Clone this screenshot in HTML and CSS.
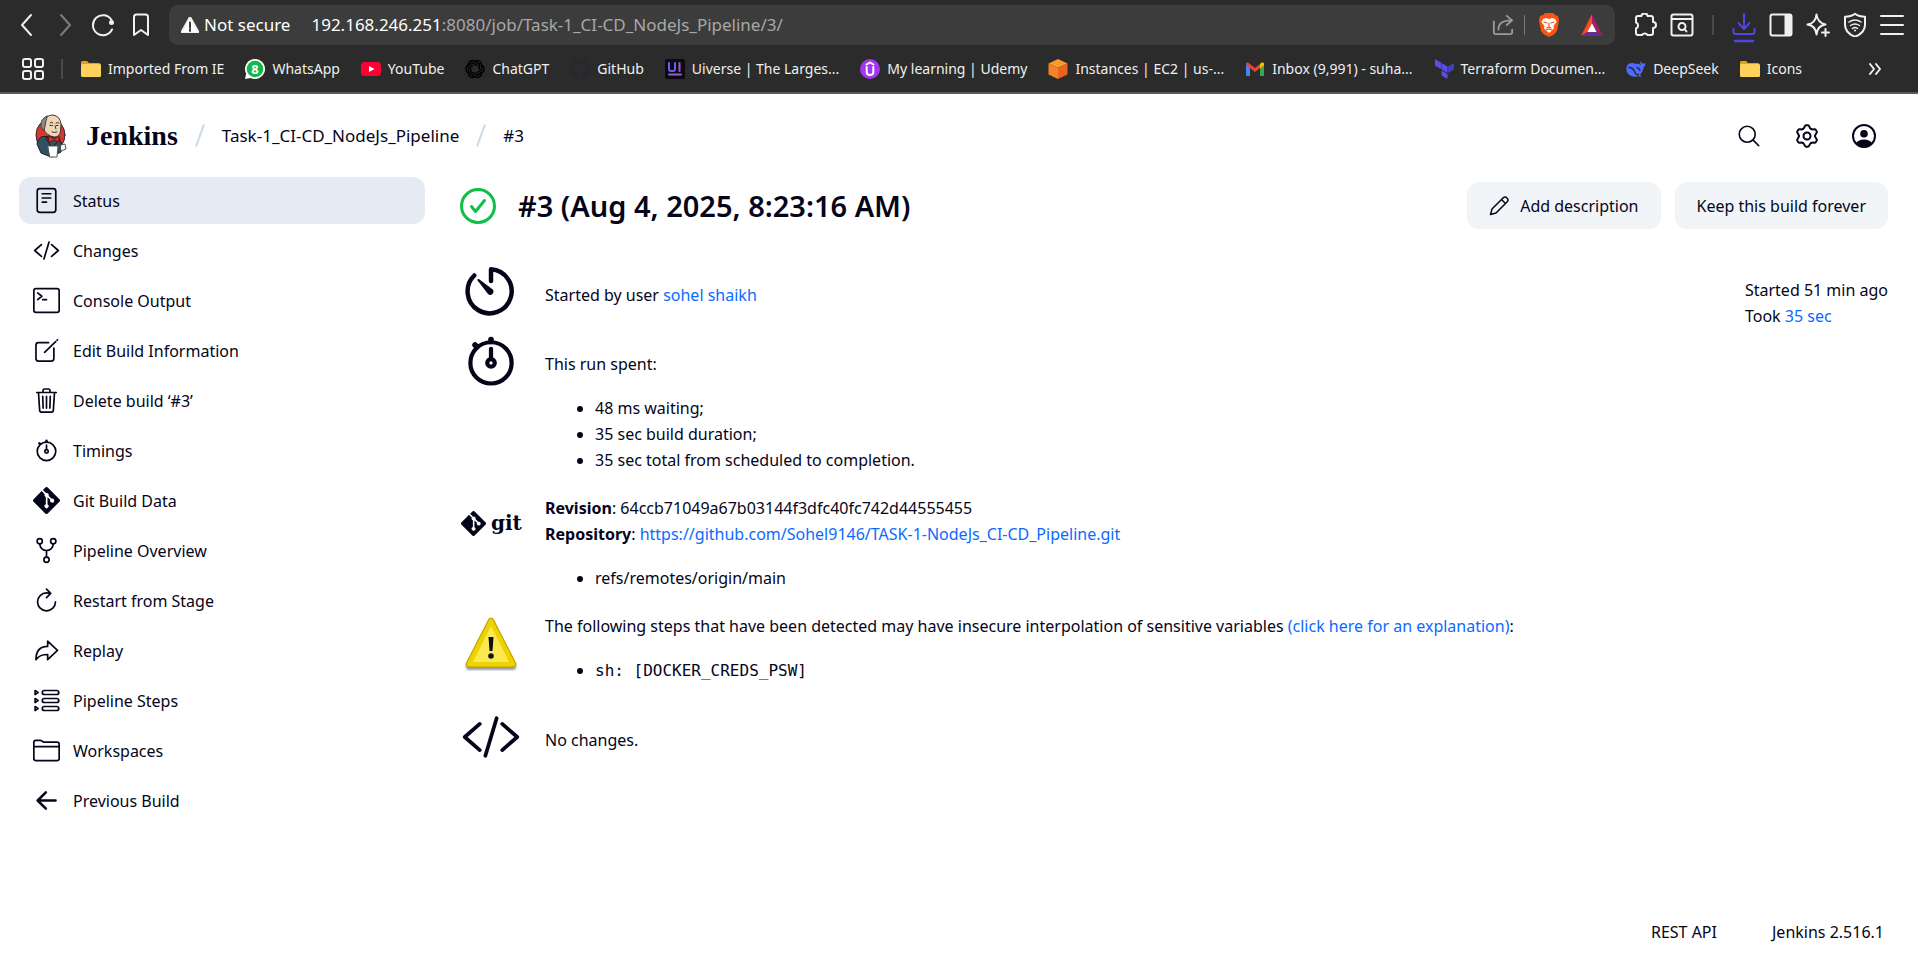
FILE: index.html
```html
<!DOCTYPE html>
<html lang="en">
<head>
<meta charset="utf-8">
<title>Task-1_CI-CD_NodeJs_Pipeline #3 - Jenkins</title>
<link rel="stylesheet" href="styles.css">
</head>
<body>
<svg class="defs" aria-hidden="true">
  <symbol id="code" viewBox="0 0 512 512"><path d="M160 368L32 256l128-112M352 368l128-112-128-112M304 96l-96 320"/></symbol>
  <symbol id="stopwatch" viewBox="0 0 512 512"><path d="M256 232v-80"/><path stroke-width="48" d="M256 88V72M132 132l-12-12"/><circle cx="256" cy="272" r="32"/><circle cx="256" cy="272" r="176"/></symbol>
  <symbol id="gitmark" viewBox="0 0 24 24"><path fill="currentColor" stroke="none" d="M23.5 10.9L13.1.5a1.5 1.5 0 0 0-2.1 0L8.8 2.6l2.8 2.8a1.8 1.8 0 0 1 2.3 2.3l2.6 2.7a1.8 1.8 0 1 1-1.1 1l-2.5-2.4v6.5a1.8 1.8 0 1 1-1.5-.1V8.8a1.8 1.8 0 0 1-1-2.4L7.700 3.600.500 10.900a1.500 1.500 0 0 0 0 2.200l10.400 10.400a1.500 1.500 0 0 0 2.200 0l10.400-10.400a1.500 1.500 0 0 0 0-2.200z"/></symbol>
  <symbol id="folder" viewBox="0 0 20 20"><path fill="#e0a312" stroke="none" d="M0 3.500a1.500 1.500 0 0 1 1.500-1.500H6l2 2h10.500L20 6v11H0z"/><rect y="5" width="20" height="13" rx="1.500" fill="#fdd35b" stroke="none"/></symbol>
  <symbol id="tooth" viewBox="0 0 24 24"><path d="M7.900 5C9 4.300 9.300 3.700 9.600 2.700Q10 1.300 11.200 1.300H12.800Q14 1.300 14.400 2.700C14.700 3.700 15 4.300 16.100 5"/></symbol>
</svg>

<div class="browser">
  <div class="toolbar">
    <div class="nav-buttons">
      <button aria-label="Back"><svg viewBox="0 0 24 24"><path d="M16 2L7 12l9 10"/></svg></button>
      <button class="dim" aria-label="Forward"><svg viewBox="0 0 24 24"><path d="M8 2l9 10L8 22"/></svg></button>
      <button aria-label="Reload"><svg viewBox="0 0 24 24"><path d="M21 16.500A10 10 0 1 1 20.500 7"/><circle cx="20.500" cy="9.500" r="2.500" fill="currentColor" stroke="none"/></svg></button>
      <button aria-label="Bookmark"><svg viewBox="0 0 24 24"><path d="M5 4q0-2.500 2.500-2.500h9Q19 1.500 19 4v18l-7-5-7 5z"/></svg></button>
    </div>
    <div class="address">
      <svg class="warn" viewBox="0 0 18 16"><path fill="#fff" d="M9 0l9 16H0z"/><path stroke="#3c3c3c" stroke-width="2" d="M9 5.500v5M9 12v2"/></svg>
      <span class="secure">Not secure</span>
      <span class="url"><b>192.168.246.251</b>:8080/job/Task-1_CI-CD_NodeJs_Pipeline/3/</span>
      <button class="share" aria-label="Share"><svg viewBox="0 0 24 24"><path d="M2 8v12q0 2 2 2h16q2 0 2-2v-3M7 17q0-10 14-10M16 2l6 5-6 5"/></svg></button>
      <i class="sep light"></i>
      <button class="brave" aria-label="Brave Shields"><svg viewBox="0 0 20 24"><path fill="#fb5412" stroke="none" d="M6 0h8l2 2 3 1 1 4-2 11-3 3.500-5 2.500-5-2.500L2 18 0 7l1-4 3-1z"/><path fill="#fff" stroke="none" d="M4 6l3-1 3 1 3-1 3 1 1.500 3-3 4 .5 2.500L10 20l-5-4.500.5-2.500-3-4z"/><path stroke="#fb5412" stroke-width="1.200" d="M5 9l3 1M15 9l-3 1M10 10v4l-2 1M10 14l2 1M7 17l3-1 3 1"/></svg></button>
      <button class="bat" aria-label="Brave Rewards"><svg viewBox="0 0 24 24"><path fill="#ff4724" stroke="none" d="M12 0L0 24l8-5 4-8z"/><path fill="#9e1f63" stroke="none" d="M12 0l12 24-8-5-4-8z"/><path fill="#662d91" stroke="none" d="M0 24h24l-8-5H8z"/><path fill="#fff" stroke="none" d="M12 10l5 9.500H7z"/></svg></button>
    </div>
    <div class="tools">
      <button aria-label="Extensions"><svg viewBox="0 0 24 24"><path d="M3 5q0-2 2-2h3.500a3 2.600 0 0 1 6 0H18q2 0 2 2v4a3 3 0 0 1 0 6v5q0 2-2 2h-3.500a3 2.500 0 0 0-5.500 0H5q-2 0-2-2v-4.500a3.200 3.200 0 0 0 0-6z"/></svg></button>
      <button aria-label="Find"><svg viewBox="0 0 24 24"><rect x="1.500" y="1.500" width="21" height="21" rx="2"/><path d="M2 6h20"/><circle cx="12" cy="13.500" r="3.500"/><path d="M14.500 16l2 2.500"/></svg></button>
      <i class="sep"></i>
      <button class="download" aria-label="Downloads"><svg viewBox="0 0 24 30"><path d="M12 1v14M6.500 10l5.500 6 5.500-6M1.500 16v3q0 2 2 2h17q2 0 2-2v-3"/><path stroke-width="2.500" d="M3 28h18"/></svg></button>
      <button aria-label="Sidebar"><svg viewBox="0 0 24 24"><rect x="1.500" y="1.500" width="21" height="21" rx="2"/><path fill="currentColor" d="M16.500 2H21v20h-4.500z"/></svg></button>
      <button aria-label="Leo AI"><svg viewBox="0 0 24 24"><path d="M10.500 1.500q1 8 9 10-8 1-9 10-1-9-9-10 8-1 9-10z"/><path stroke-width="2" d="M19.500 16v7M16 19.500h7"/></svg></button>
      <button aria-label="VPN"><svg viewBox="0 0 24 24"><path d="M12 .8q4 3 10 3v8q0 8-10 12-10-4-10-12v-8q6 0 10-3z"/><path stroke-width="1.500" d="M6 9q6-4 12 0M7.500 12.500q4.500-3 9 0M9.500 15.500q2.500-2 5 0"/><circle cx="12" cy="17.500" r="1" fill="currentColor" stroke="none"/></svg></button>
      <button aria-label="Menu"><svg viewBox="0 0 24 24"><path stroke-width="2" d="M1 3h22M1 12h22M1 21h22"/></svg></button>
    </div>
  </div>
  <nav class="bookmarks" aria-label="Bookmarks">
    <button class="apps" aria-label="All apps"><svg viewBox="0 0 24 24"><rect x="2" y="2" width="8" height="8" rx="2"/><rect x="14" y="2" width="8" height="8" rx="2"/><rect x="2" y="14" width="8" height="8" rx="2"/><rect x="14" y="14" width="8" height="8" rx="2"/></svg></button>
    <i class="sep"></i>
    <div class="marks">
    <a href="#"><svg><use href="#folder"/></svg>Imported From IE</a>
    <a href="#"><svg viewBox="0 0 20 20"><path fill="#fff" stroke="none" d="M10 0a10 10 0 1 1-4.500 18.900L0 20l1.200-5.200A10 10 0 0 1 10 0z"/><circle cx="10" cy="10" r="8.300" fill="#12b74a" stroke="none"/><text x="10" y="14.500" class="badge">8</text></svg>WhatsApp</a>
    <a href="#"><svg viewBox="0 0 20 20"><rect y="3" width="20" height="14" rx="3.500" fill="#ff0033" stroke="none"/><path fill="#fff" stroke="none" d="M8 7l5.500 3L8 13z"/></svg>YouTube</a>
    <a href="#"><svg viewBox="0 0 20 20" class="gpt"><path d="M10 2.500a4 4 0 0 1 6.500 3.700v5l-4.500 2.500"/><path transform="rotate(60 10 10)" d="M10 2.500a4 4 0 0 1 6.500 3.700v5l-4.500 2.500"/><path transform="rotate(120 10 10)" d="M10 2.500a4 4 0 0 1 6.500 3.700v5l-4.500 2.500"/><path transform="rotate(180 10 10)" d="M10 2.500a4 4 0 0 1 6.500 3.700v5l-4.500 2.500"/><path transform="rotate(240 10 10)" d="M10 2.500a4 4 0 0 1 6.500 3.700v5l-4.500 2.500"/><path transform="rotate(300 10 10)" d="M10 2.500a4 4 0 0 1 6.500 3.700v5l-4.500 2.500"/></svg>ChatGPT</a>
    <a href="#"><svg viewBox="0 0 16 16"><path fill="#24292f" stroke="none" d="M8 0a8 8 0 0 0-2.530 15.590c.4.070.55-.17.55-.38v-1.490c-2.010.37-2.530-.49-2.690-.94-.09-.23-.48-.94-.82-1.130-.28-.15-.68-.52-.01-.53.63-.01 1.080.58 1.230.82.72 1.210 1.870.87 2.330.66.070-.52.280-.87.510-1.070-1.780-.2-3.640-.89-3.640-3.950 0-.87.310-1.590.820-2.150-.080-.2-.360-1.020.080-2.120 0 0 .670-.210 2.200.820a7.500 7.500 0 0 1 4 0c1.530-1.040 2.200-.820 2.200-.820.440 1.100.160 1.920.080 2.120.510.560.820 1.270.820 2.150 0 3.070-1.870 3.750-3.650 3.950.290.250.540.730.540 1.480v2.200c0 .210.150.460.550.380A8 8 0 0 0 8 0z"/></svg>GitHub</a>
    <a href="#"><svg viewBox="0 0 20 20"><rect width="20" height="20" rx="2" fill="#0c0c10" stroke="none"/><path stroke="#6c5cf0" stroke-width="2" d="M4 4v6q0 2 2 2h2q2 0 2-2V4"/><path stroke="#9a5ad6" stroke-width="2" d="M14.500 4v8M4 15.500h12"/></svg>Uiverse | The Larges...</a>
    <a href="#"><svg viewBox="0 0 20 20"><circle cx="10" cy="10" r="10" fill="#a435f0" stroke="none"/><path stroke="#fff" stroke-width="2" d="M6.500 5.500L10 3.500l3.500 2M6.700 8v5q0 3 3.300 3t3.300-3V8"/></svg>My learning | Udemy</a>
    <a href="#"><svg viewBox="0 0 20 20"><path fill="#fb9a2c" stroke="none" d="M10 0l9.500 4.500L10 9 .500 4.500z"/><path fill="#f58225" stroke="none" d="M.500 4.500L10 9v11L.500 15.500z"/><path fill="#e8651f" stroke="none" d="M19.500 4.500L10 9v11l9.500-4.500z"/></svg>Instances | EC2 | us-...</a>
    <a href="#"><svg viewBox="0 0 20 20"><path fill="#4285f4" stroke="none" d="M1 5l4 3v9H2q-1 0-1-1z"/><path fill="#34a853" stroke="none" d="M19 5l-4 3v9h3q1 0 1-1z"/><path fill="#ea4335" stroke="none" d="M1 5q0-2 2-1.500L10 9l7-5.500Q19 3 19 5l-4 4-5 4-5-4z"/><path fill="#fbbc04" stroke="none" d="M15 5l2-1.500Q19 3 19 5v1.500l-4 3z"/></svg>Inbox (9,991) - suha...</a>
    <a href="#"><svg viewBox="0 0 20 20"><path fill="#5c4ee5" stroke="none" d="M1 0l6 3.500v6.500L1 6.500zM7.500 4l6 3.500V14l-6-3.500zM7.500 11.500l6 3.500v5l-6-3.500z"/><path fill="#4040b2" stroke="none" d="M14 7.500l6-3.500v6.500L14 14z"/></svg>Terraform Documen...</a>
    <a href="#"><svg viewBox="0 0 20 20"><path fill="#4d6bfe" stroke="none" d="M19.600 4q-1.500 1-2.600.5-2-.500-2-2.500-1.500 1.500 0 4L12 4.500 10 5Q4 2.500 1 6.500q-2 5 1.500 9 5 3.500 10 1.500l2 1 .500-1.500-1-1Q17.500 12 17.500 8q2-1 2.100-4z"/><path stroke="#2b2b2b" stroke-width="1.500" d="M3 8.500q4 0 5.500 4t4 3M11 8.500q2.500.500 3 3"/></svg>DeepSeek</a>
    <a href="#"><svg><use href="#folder"/></svg>Icons</a>
    </div>
    <button class="more" aria-label="More bookmarks"><svg viewBox="0 0 14 14"><path d="M2 2l4 5-4 5M8 2l4 5-4 5"/></svg></button>
  </nav>
</div>

<header class="page-header">
  <a class="brand" href="#"><svg class="butler" viewBox="0 0 32 44"><ellipse cx="15.500" cy="21" rx="14.500" ry="16" fill="#d33833" stroke="#3a2226"/><path fill="#335061" stroke="#16202a" d="M6 23q-4 3-4 7l4 9 10 4 10-5 1-6q-1-7-7-10z"/><path fill="#f0d6b7" stroke="#433" d="M8 8Q11 1 18 1q7 1 8 9l-.500 7q-1 6-6 6-8-1-11-8z"/><path fill="#8b8984" stroke="#444" d="M12 2Q5 5 6 13l3 4 1-5 1-5z"/><path stroke="#333" d="M15 9q2-2 3 0M21 9q2-1 3 0M15 11.500h2.500M21 11.500h2M20 12l1 3M17 18q3 1 5 0"/><path fill="#335061" stroke="#16202a" d="M11 24l6 10 8-9z"/><path fill="#d33833" stroke="#711" d="M14 22l5 3 5-3v6l-5-2-5 2z"/><path fill="#fff" stroke="#555" d="M13 32h10l-1 11h-7zM26 31l4-1 1 5-5 2z"/></svg><span>Jenkins</span></a>
  <i class="slash"></i>
  <a href="#">Task-1_CI-CD_NodeJs_Pipeline</a>
  <i class="slash"></i>
  <a href="#">#3</a>
  <div class="header-actions">
    <button aria-label="Search"><svg viewBox="0 0 512 512"><path d="M221 64a157 157 0 1 0 157 157A157 157 0 0 0 221 64zM338 338l110 110"/></svg></button>
    <button aria-label="Manage Jenkins"><svg viewBox="0 0 24 24" class="gear"><use href="#tooth"/><use href="#tooth" transform="rotate(60 12 12)"/><use href="#tooth" transform="rotate(120 12 12)"/><use href="#tooth" transform="rotate(180 12 12)"/><use href="#tooth" transform="rotate(240 12 12)"/><use href="#tooth" transform="rotate(300 12 12)"/><circle cx="12" cy="12" r="3.500"/></svg></button>
    <button aria-label="User"><svg viewBox="0 0 24 24" class="gear"><circle cx="12" cy="12" r="11"/><circle cx="12" cy="9.800" r="3.800" fill="currentColor" stroke="none"/><path fill="currentColor" stroke="none" d="M4 19q2.500-3.500 8-3.500t8 3.500q-3 4.500-8 4.500T4 19z"/></svg></button>
  </div>
</header>

<div class="body">
  <nav class="tasks" aria-label="Build tasks">
    <a class="active" href="#"><svg viewBox="0 0 512 512"><rect x="80" y="32" width="352" height="448" rx="48"/><path d="M176 128h160M176 208h160M176 288h80"/></svg>Status</a>
    <a href="#"><svg><use href="#code"/></svg>Changes</a>
    <a href="#"><svg viewBox="0 0 512 512"><rect x="16" y="32" width="480" height="448" rx="40"/><path d="M88 112l80 64-80 64M184 240h72"/></svg>Console Output</a>
    <a href="#"><svg viewBox="0 0 512 512"><path d="M396 208v200a48 48 0 0 1-48 48H104a48 48 0 0 1-48-48V156a48 48 0 0 1 48-48h190M220 290L430 88M456 62l10-10"/></svg>Edit Build Information</a>
    <a href="#"><svg viewBox="0 0 512 512"><path d="M104 104l22 336q2 36 34 36h192q32 0 34-36l22-336M72 104h368M190 104V64q2-26 26-26h80q24 0 26 26v40M256 176v224M184 176l8 224M328 176l-8 224"/></svg>Delete build ‘#3’</a>
    <a href="#"><svg><use href="#stopwatch"/></svg>Timings</a>
    <a href="#"><svg><use href="#gitmark"/></svg>Git Build Data</a>
    <a href="#"><svg viewBox="0 0 512 512"><circle cx="128" cy="80" r="50"/><circle cx="384" cy="80" r="50"/><circle cx="256" cy="432" r="50"/><path d="M256 256v124M128 130c0 84 68 126 128 126s128-42 128-126"/></svg>Pipeline Overview</a>
    <a href="#"><svg viewBox="0 0 512 512"><path d="M320 122s-24-10-64-10a170 170 0 1 0 170 170M256 40l80 80-80 80"/></svg>Restart from Stage</a>
    <a href="#"><svg viewBox="0 0 512 512"><path d="M464 252L278 78v98C104 176 56 304 56 430c50-64 96-98 222-98v98z"/></svg>Replay</a>
    <a href="#"><svg viewBox="0 0 512 512"><path d="M40 66l56 38-56 38zM40 218l56 38-56 38zM40 370l56 38-56 38z"/><rect x="176" y="66" width="312" height="76" rx="38"/><rect x="176" y="218" width="312" height="76" rx="38"/><rect x="176" y="370" width="312" height="76" rx="38"/></svg>Pipeline Steps</a>
    <a href="#"><svg viewBox="0 0 512 512"><path d="M456 448H56a40 40 0 0 1-40-40V104a40 40 0 0 1 40-40h84q12 0 22 7l28 18q10 7 22 7h244a40 40 0 0 1 40 40v272a40 40 0 0 1-40 40zM16 184h480"/></svg>Workspaces</a>
    <a href="#"><svg viewBox="0 0 512 512"><path stroke-width="48" d="M244 412L88 256l156-156M96 256h332"/></svg>Previous Build</a>
  </nav>

  <main>
    <div class="title-bar">
      <svg class="result" viewBox="0 0 36 36"><circle cx="18" cy="18" r="16.500"/><path d="M11.500 18.500l4 5 9-11"/></svg>
      <h1>#3 (Aug 4, 2025, 8:23:16 AM)</h1>
      <button class="action"><svg viewBox="0 0 20 20"><path d="M1.500 18.500l1.500-5.500L14 2a2.800 2.800 0 0 1 4 4L7 17zM12.500 3.500l4 4"/></svg>Add description</button>
      <button class="action">Keep this build forever</button>
    </div>
    <div class="details">
      <div class="summary">
        <section class="row">
          <svg viewBox="0 0 512 512"><path stroke-width="38" d="M113 115A188 188 0 1 0 256 62v100"/><path fill="currentColor" stroke="none" d="M232 276l-92-120q-2-12 12-10l122 90a30 30 0 0 1-42 40z"/></svg>
          <p>Started by user <a href="#">sohel shaikh</a></p>
        </section>
        <section class="row">
          <svg class="bold"><use href="#stopwatch"/></svg>
          <div><p>This run spent:</p><ul><li>48 ms waiting;</li><li>35 sec build duration;</li><li>35 sec total from scheduled to completion.</li></ul></div>
        </section>
        <section class="row top">
          <span class="gitlogo"><svg><use href="#gitmark"/></svg>git</span>
          <div><p><b>Revision</b>: 64ccb71049a67b03144f3dfc40fc742d44555455</p><p><b>Repository</b>: <a href="#">https://github.com/Sohel9146/TASK-1-NodeJs_CI-CD_Pipeline.git</a></p><ul><li>refs/remotes/origin/main</li></ul></div>
        </section>
        <section class="row top">
          <svg viewBox="0 0 60 60"><defs><filter id="soft"><feGaussianBlur stdDeviation="1.200"/></filter></defs><rect x="5" y="50" width="50" height="7" rx="3" fill="#999" stroke="none" filter="url(#soft)"/><path fill="#edd400" stroke="#c4a000" stroke-width="1.200" d="M27.500 7q2.500-4 5 0l22 43q1 4-3 4h-43q-4 0-3-4z"/><path fill="#fce94f" stroke="none" d="M30 13l18 36H12z"/><path fill="#111" stroke="none" d="M27.500 24h5l-1 14h-3z"/><circle cx="30" cy="43" r="2.800" fill="#111" stroke="none"/></svg>
          <div><p>The following steps that have been detected may have insecure interpolation of sensitive variables <a href="#">(click here for an explanation)</a>:</p><ul><li><code>sh: [DOCKER_CREDS_PSW]</code></li></ul></div>
        </section>
        <section class="row last">
          <svg><use href="#code"/></svg>
          <p>No changes.</p>
        </section>
      </div>
      <div class="meta"><p>Started 51 min ago</p><p>Took <a href="#">35 sec</a></p></div>
    </div>
  </main>
</div>

<footer><a href="#">REST API</a><a href="#">Jenkins 2.516.1</a></footer>
</body>
</html>
```
FILE: styles.css
```css
* { box-sizing: border-box; }
body {
  margin: 0;
  min-height: 100vh;
  display: flex;
  flex-direction: column;
  background: #fff;
  color: #05051a;
  font: 16px/26px "Noto Sans", "Open Sans", sans-serif;
}
p, ul, h1 { margin: 0; }
a { color: inherit; text-decoration: none; }
button { display: flex; align-items: center; padding: 0; border: 0; background: none; color: inherit; font: inherit; }
svg { flex: none; fill: none; stroke: currentColor; stroke-linecap: round; stroke-linejoin: round; }
.defs { position: absolute; width: 0; height: 0; }

/* browser frame */
.browser { background: #2b2b2b; color: #f0f0f0; border-bottom: 2px solid #5b5b5b; }
.browser svg { width: 24px; height: 24px; stroke-width: 2; }
.sep { width: 2px; height: 20px; background: #454b50; }
.sep.light { width: 1px; background: #777; }
.toolbar { display: flex; align-items: center; padding: 5px 14px 5px 15px; }
.nav-buttons { display: flex; gap: 14px; }
.nav-buttons .dim { color: #7c7c7c; }
.nav-buttons + .address { margin-left: 16px; }
.address { flex: 1; display: flex; align-items: center; height: 40px; padding: 0 12px; border-radius: 9px; background: #3c3c3c; font-size: 17px; }
.address .warn { width: 18px; height: 16px; }
.secure { margin: 0 21px 0 5px; color: #fff; }
.url { flex: 1; color: #a8a8a8; }
.url b { color: #fff; font-weight: 400; }
.share { color: #9a9a9a; margin-right: 10px; }
.address .share svg, .address .bat svg { width: 22px; height: 22px; }
.brave { margin: 0 20px 0 12px; }
.tools { display: flex; align-items: center; gap: 13px; margin-left: 18px; }
.tools .download { color: #5046e5; height: 24px; }
.tools .download svg { height: 30px; margin-top: 6px; }
.tools .sep { margin: 0 5px; }

.bookmarks { display: flex; align-items: center; height: 42px; padding: 0 36px 5px 21px; font-size: 14px; }
.bookmarks .apps { margin-right: 16px; }
.marks { display: flex; flex: 1; gap: 21px; margin-left: 18px; }
.marks a { display: flex; align-items: center; gap: 7px; white-space: nowrap; }
.marks svg { width: 20px; height: 20px; }
.marks .gpt { color: #000; stroke-width: 1.5; }
.badge { fill: #fff; stroke: none; font: bold 13px "Open Sans", sans-serif; text-anchor: middle; }
.browser .more svg { width: 14px; height: 14px; }

/* page header */
.page-header { display: flex; align-items: center; height: 83px; padding: 0 42px 0 35px; font-size: 17px; }
.brand { display: flex; align-items: center; gap: 19px; font: bold 28px/32px "Liberation Serif", serif; }
.butler { width: 32px; height: 44px; stroke-width: 1; }
.slash { width: 2px; height: 23px; margin: 0 21px; background: #ccdae6; transform: rotate(20deg); }
.header-actions { display: flex; gap: 33px; margin-left: auto; }
.header-actions svg { width: 26px; height: 26px; stroke-width: 32; }
.header-actions .gear { width: 24px; height: 24px; stroke-width: 2; }

/* side panel */
.body { display: flex; gap: 35px; padding: 0 30px 0 19px; flex: 1; }
.tasks { flex: none; width: 406px; display: flex; flex-direction: column; gap: 3px; }
.tasks a { display: flex; align-items: center; gap: 13px; height: 47px; padding: 0 14px; border-radius: 12px; }
.tasks .active { background: #e6ebf3; }
.tasks svg { width: 27px; height: 27px; stroke-width: 32; }

/* build summary */
main { flex: 1; min-width: 0; }
.title-bar { display: flex; align-items: center; gap: 14px; margin-top: 5px; }
.result { width: 36px; height: 36px; color: #10bf48; stroke-width: 3; }
h1 { flex: 1; margin-left: 8px; font-size: 29px; line-height: 47px; font-weight: 600; }
.action { height: 47px; padding: 0 22px; gap: 11px; border-radius: 12px; background: #f1f5f8; }
.action svg { width: 20px; height: 20px; stroke-width: 1.5; }
.details { display: flex; justify-content: space-between; padding: 33px 0 0 1px; }
.details a { color: #0b6aff; }
.row { display: flex; align-items: flex-start; gap: 24px; margin-bottom: 9px; }
.row > svg, .gitlogo { width: 60px; flex: none; }
.row > svg { height: 60px; stroke-width: 32; }
.row > svg.bold { stroke-width: 36; }
.row > p, .row > div { padding-top: 20px; }
.row ul { padding-left: 50px; margin: 18px 0 8px; }
.row.top > svg { margin-top: 5px; }
.row.top > p, .row.top > div { padding-top: 5px; }
.row.last { margin-top: 15px; }
.gitlogo { display: flex; align-items: center; gap: 5px; margin-top: 17px; font: bold 20px/32px "DejaVu Serif", serif; }
.gitlogo svg { width: 25px; height: 25px; }
code { font: 16px/26px "DejaVu Sans Mono", monospace; }
.meta { flex: none; padding-top: 15px; }

footer { display: flex; justify-content: flex-end; gap: 55px; padding: 0 34px 22px; }
```
